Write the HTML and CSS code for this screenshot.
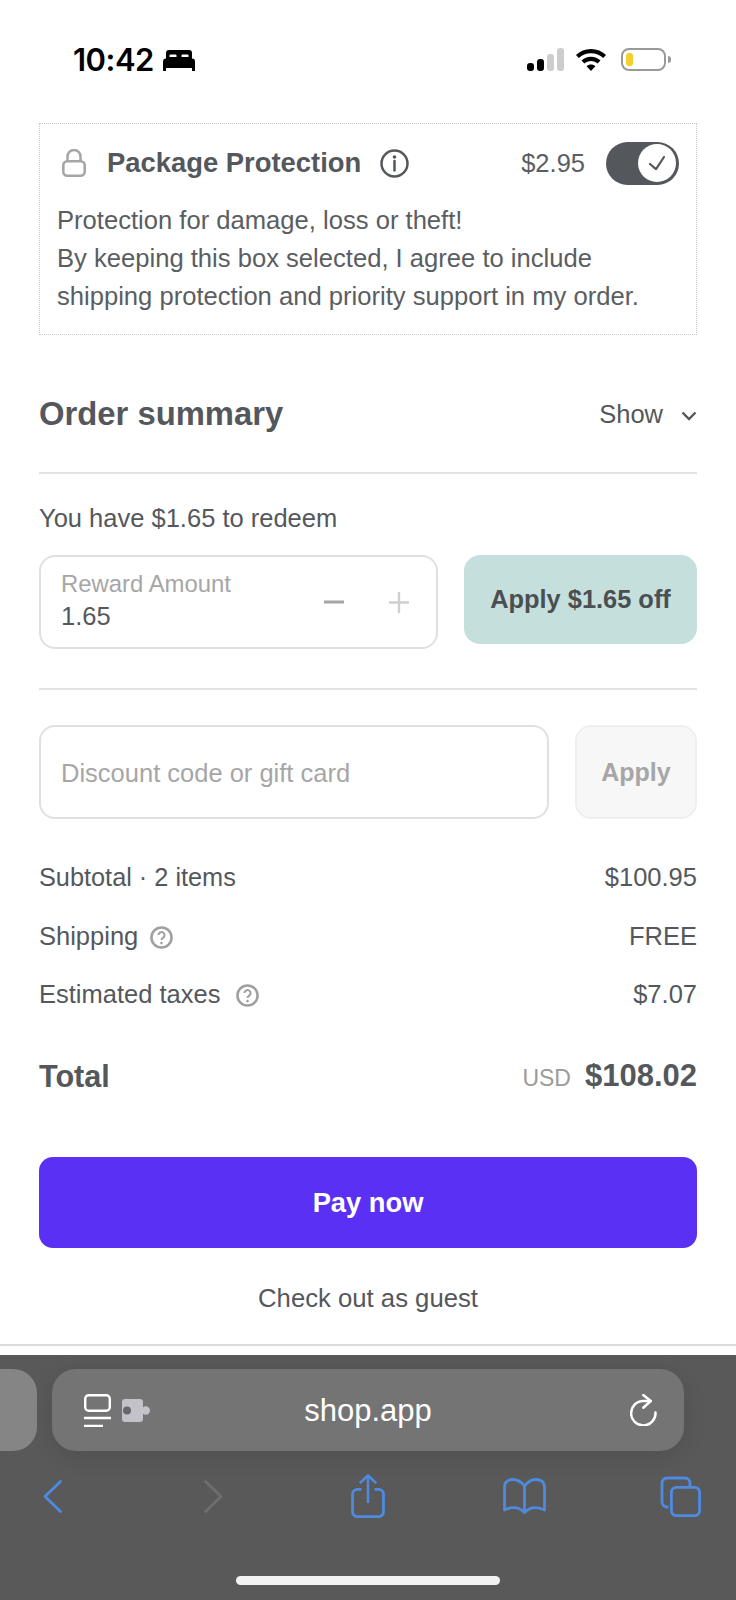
FILE: index.html
```html
<!DOCTYPE html>
<html lang="en">
<head>
<meta charset="utf-8">
<title>Checkout</title>
<link rel="stylesheet" href="styles.css">
</head>
<body>
<div class="page">
  <header class="status">
    <div class="status-left">
      <span class="time">10:42</span>
      <svg class="bed" viewBox="0 0 32 21"><path d="M6 0h20a3 3 0 0 1 3 3v6H3V3a3 3 0 0 1 3-3z" fill="#000"/><path d="M7.500 4.500h5a1 1 0 0 1 1 1V7h-7V5.500a1 1 0 0 1 1-1zM19.500 4.500h5a1 1 0 0 1 1 1V7h-7V5.500a1 1 0 0 1 1-1z" fill="#fff"/><path d="M3 8.500h26a3 3 0 0 1 3 3V21h-3v-3H3v3H0v-9.500a3 3 0 0 1 3-3z" fill="#000"/></svg>
    </div>
    <div class="status-right">
      <div class="signal"><i class="b1"></i><i class="b2"></i><i class="b3"></i><i class="b4"></i></div>
      <svg class="wifi" viewBox="0 0 30 22"><path d="M15 0c5.800 0 11 2.300 15 6l-2.800 3C24 6 19.700 4.200 15 4.200S6 6 2.800 9L0 6C4 2.300 9.200 0 15 0z" fill="#000"/><path d="M15 7.800c3.700 0 7 1.400 9.500 3.700l-2.900 3c-1.800-1.500-4.100-2.500-6.600-2.500s-4.800 1-6.600 2.500l-2.900-3C8 9.200 11.300 7.800 15 7.800z" fill="#000"/><path d="M15 15.500c1.700 0 3.200.6 4.400 1.700L15 22l-4.400-4.800c1.200-1.100 2.700-1.700 4.400-1.700z" fill="#000"/></svg>
      <div class="battery"><span class="battery-fill"></span></div>
      <span class="battery-nub"></span>
    </div>
  </header>

  <main class="content">
    <section class="protect">
      <div class="protect-head">
        <svg class="lock" viewBox="0 0 24 28"><path d="M5.500 12.500V7.500a6.500 6.500 0 0 1 13 0v5" fill="none" stroke="#a6a6a6" stroke-width="2.500"/><rect x="1.300" y="12.300" width="21.400" height="14.400" rx="4" fill="none" stroke="#a6a6a6" stroke-width="2.600"/></svg>
        <h2 class="protect-title">Package Protection</h2>
        <svg class="info" viewBox="0 0 29 29"><circle cx="14.500" cy="14.500" r="13" fill="none" stroke="#54585c" stroke-width="2.500"/><circle cx="14.500" cy="8" r="1.800" fill="#54585c"/><path d="M14.500 12v9.500" fill="none" stroke="#54585c" stroke-width="2.500" stroke-linecap="round"/></svg>
        <span class="protect-price">$2.95</span>
        <div class="toggle">
          <div class="knob"><svg viewBox="0 0 16 14" class="tick"><path d="M1 8l6 5.200L15 1" fill="none" stroke="#54585c" stroke-width="2.200" stroke-linecap="round" stroke-linejoin="round"/></svg></div>
        </div>
      </div>
      <p class="protect-text">Protection for damage, loss or theft!<br>By keeping this box selected, I agree to include<br>shipping protection and priority support in my order.</p>
    </section>

    <section class="summary-head">
      <h2 class="summary-title">Order summary</h2>
      <div class="show">
        <span>Show</span>
        <svg class="chev" viewBox="0 0 16 10"><path d="M1.500 1.500L8 8l6.500-6.500" fill="none" stroke="#54585c" stroke-width="2.400"/></svg>
      </div>
    </section>

    <p class="redeem">You have $1.65 to redeem</p>
    <section class="reward-row">
      <div class="reward-box">
        <div class="reward-fields">
          <span class="reward-label">Reward Amount</span>
          <span class="reward-value">1.65</span>
        </div>
        <svg class="stepper-minus" viewBox="0 0 20 4"><rect width="20" height="3" y="0.500" fill="#a6a6a6"/></svg>
        <svg class="stepper-plus" viewBox="0 0 20 21"><path d="M10 0v21M0 10.500h20" stroke="#cfcfcf" stroke-width="2.400" fill="none"/></svg>
      </div>
      <button class="apply-reward">Apply $1.65 off</button>
    </section>

    <section class="discount-row">
      <div class="discount-box">Discount code or gift card</div>
      <button class="apply-code">Apply</button>
    </section>

    <section class="costs">
      <div class="cost"><span class="subtotal">Subtotal · 2 items</span><span>$100.95</span></div>
      <div class="cost"><span class="with-help">Shipping <svg class="help" viewBox="0 0 24 24"><circle cx="12" cy="12" r="10.500" fill="none" stroke="#a0a0a0" stroke-width="2.700"/><path d="M8.800 9.500a3.200 3.200 0 1 1 5 2.700c-1.200.8-1.800 1.300-1.800 2.500" fill="none" stroke="#a0a0a0" stroke-width="2.100"/><circle cx="12" cy="17.800" r="1.400" fill="#a0a0a0"/></svg></span><span>FREE</span></div>
      <div class="cost"><span class="with-help wide">Estimated taxes <svg class="help" viewBox="0 0 24 24"><circle cx="12" cy="12" r="10.500" fill="none" stroke="#a0a0a0" stroke-width="2.700"/><path d="M8.800 9.500a3.200 3.200 0 1 1 5 2.700c-1.200.8-1.800 1.300-1.800 2.500" fill="none" stroke="#a0a0a0" stroke-width="2.100"/><circle cx="12" cy="17.800" r="1.400" fill="#a0a0a0"/></svg></span><span>$7.07</span></div>
    </section>

    <section class="total">
      <span class="total-label">Total</span>
      <span class="total-right"><span class="currency">USD</span><span class="total-amount">$108.02</span></span>
    </section>

    <button class="pay">Pay now</button>
    <p class="guest">Check out as guest</p>
  </main>

  <div class="page-rule"></div>

  <footer class="safari">
    <div class="pills">
      <div class="pill-side"></div>
      <div class="pill-url">
        <svg class="reader" viewBox="0 0 27 33"><rect x="1.200" y="1.200" width="24.600" height="15.600" rx="3.500" fill="none" stroke="#fff" stroke-width="2.400"/><path d="M0 24h27M0 32h19" stroke="#fff" stroke-width="2.400" fill="none"/></svg>
        <svg class="puzzle" viewBox="0 0 28 23"><rect width="21" height="23" rx="3" fill="#c3c2c9"/><circle cx="23.800" cy="11.500" r="4.200" fill="#c3c2c9"/><circle cx="5" cy="11.500" r="4" fill="#67676b"/></svg>
        <span class="url">shop.app</span>
        <svg class="reload" viewBox="0 0 28 32"><path d="M20.700 7H13.300A12.200 12.200 0 1 0 25.500 18.500" fill="none" stroke="#fff" stroke-width="2.500" stroke-linecap="round"/><path d="M13.300 1l7.400 6-7.400 6.700" fill="none" stroke="#fff" stroke-width="2.500" stroke-linecap="round" stroke-linejoin="round"/></svg>
      </div>
    </div>
    <nav class="tools">
      <svg class="back" viewBox="0 0 19 33"><path d="M17.500 1.500L2 16.500 17.500 31.500" fill="none" stroke="#4d8ae0" stroke-width="2.800" stroke-linecap="round" stroke-linejoin="round"/></svg>
      <svg class="forward" viewBox="0 0 19 33"><path d="M1.500 1.500L17 16.500 1.500 31.500" fill="none" stroke="#6e6e6e" stroke-width="2.800" stroke-linecap="round" stroke-linejoin="round"/></svg>
      <svg class="share" viewBox="0 0 34 44"><path d="M10.500 15.300H6.500a5 5 0 0 0-5 5v17.400a5 5 0 0 0 5 5h21a5 5 0 0 0 5-5V20.300a5 5 0 0 0-5-5h-4" fill="none" stroke="#4d8ae0" stroke-width="2.800"/><path d="M17 28V2M9.500 8.500L17 1.500 24.500 8.500" fill="none" stroke="#4d8ae0" stroke-width="2.500" stroke-linecap="round" stroke-linejoin="round"/></svg>
      <svg class="book" viewBox="0 0 43 36"><path d="M21.500 8C18 3.500 14 1.500 10 1.500 5 1.500 1.500 4 1.500 9v23c7-3.500 14.500-3 20 2.500 5.500-5.500 13-6 20-2.500V9c0-5-3.500-7.500-8.500-7.500-4 0-8 2-11.500 6.500zM21.500 8v26" fill="none" stroke="#4d8ae0" stroke-width="2.800" stroke-linejoin="round"/></svg>
      <svg class="tabs" viewBox="0 0 41 41"><path d="M8.500 31H7a5 5 0 0 1-5-5V7a5 5 0 0 1 5-5h18a5 5 0 0 1 5 5v3" fill="none" stroke="#4d8ae0" stroke-width="2.800"/><rect x="11.400" y="11.400" width="28.200" height="28.200" rx="5" fill="none" stroke="#4d8ae0" stroke-width="2.800"/></svg>
    </nav>
    <div class="home-bar"></div>
  </footer>
</div>
</body>
</html>
```

FILE: styles.css
```css
* { box-sizing: border-box; }
html, body { margin: 0; padding: 0; background: #fff; }
body { font-family: "Liberation Sans", Arial, sans-serif; color: #54585c; }
h2, p { margin: 0; }
button { font-family: inherit; border: 0; padding: 0; }

.page { width: 736px; height: 1600px; overflow: hidden; display: flex; flex-direction: column; }

/* status bar */
.status { height: 123px; flex: none; padding: 48px 65px 0 73px; display: flex; justify-content: space-between; align-items: flex-start; }
.status-left { display: flex; align-items: center; gap: 9px; height: 24px; }
.time { font-family: Inter, sans-serif; font-weight: 600; font-size: 31px; line-height: 24px; color: #000; letter-spacing: -0.5px; }
.bed { width: 32px; height: 21px; margin-top: 1px; }
.status-right { display: flex; align-items: flex-end; height: 23px; }
.signal { display: flex; align-items: flex-end; gap: 3px; height: 23px; margin-right: 12px; }
.signal i { display: block; width: 7px; border-radius: 3px; background: #000; }
.signal .b1 { height: 8px; }
.signal .b2 { height: 12px; }
.signal .b3 { height: 17px; background: #cdcdcd; }
.signal .b4 { height: 23px; background: #cdcdcd; }
.wifi { width: 30px; height: 22px; margin-right: 15px; }
.battery { width: 45px; height: 23px; border: 2px solid #999; border-radius: 8px; padding: 3px; background: #fff; }
.battery-fill { display: block; width: 7px; height: 13px; border-radius: 3px; background: #f5cf2b; }
.battery-nub { width: 3px; height: 7px; margin: 0 0 8px 2px; background: #999; border-radius: 0 3px 3px 0; }

/* content */
.content { padding: 0 39px; display: flex; flex-direction: column; flex: none; }

.protect { height: 212px; border: 1px dotted #c8c8c8; padding: 17px 17px 0; }
.protect-head { display: flex; align-items: center; height: 44px; }
.lock { width: 24px; height: 28px; margin-left: 5px; flex: none; }
.protect-title { font-size: 27.400px; font-weight: 700; line-height: 44px; margin-left: 21px; color: #54585c; }
.info { width: 29px; height: 29px; margin-left: 19px; flex: none; }
.protect-price { font-size: 25.500px; margin-left: auto; color: #5a5e62; }
.toggle { width: 73px; height: 43px; border-radius: 22px; background: #54585c; margin-left: 21px; padding: 2.500px 3px 2.500px 32px; }
.knob { width: 38px; height: 38px; border-radius: 50%; background: #fff; display: flex; align-items: center; justify-content: center; }
.tick { width: 16px; height: 14px; }
.protect-text { font-size: 25.600px; line-height: 38px; margin-top: 16px; color: #5a5e62; }

.summary-head { margin-top: 58px; height: 81px; padding: 2px 0 39px; border-bottom: 2px solid #e3e3e3; display: flex; justify-content: space-between; align-items: center; }
.summary-title { font-size: 32.800px; font-weight: 700; line-height: 40px; }
.show { display: flex; align-items: center; gap: 18px; font-size: 25.500px; }
.chev { width: 16px; height: 10px; margin-top: 3px; }

.redeem { font-size: 25.500px; line-height: 30px; margin-top: 29px; }

.reward-row { margin-top: 22px; padding-bottom: 39px; border-bottom: 2px solid #e3e3e3; display: flex; justify-content: space-between; align-items: flex-start; height: 135px; }
.reward-box { width: 399px; height: 94px; border: 2px solid #e0e0e0; border-radius: 16px; padding: 0 27px 0 20px; display: flex; align-items: center; }
.reward-fields { display: flex; flex-direction: column; flex: 1; margin-bottom: 4px; }
.reward-label { font-size: 23.900px; line-height: 33px; color: #a6a6a6; }
.reward-value { font-size: 25.500px; line-height: 33px; color: #54585c; }
.stepper-minus { width: 20px; height: 4px; margin: 0 45px 0 0; }
.stepper-plus { width: 20px; height: 21px; }
.apply-reward { width: 233px; height: 89px; border-radius: 16px; background: #c5e0dc; color: #4a4f52; font-size: 25.400px; font-weight: 700; }

.discount-row { margin-top: 35px; display: flex; justify-content: space-between; }
.discount-box { width: 510px; height: 94px; border: 2px solid #e0e0e0; border-radius: 16px; padding: 2px 0 0 20px; display: flex; align-items: center; font-size: 25.500px; color: #a6a6a6; }
.apply-code { width: 122px; height: 94px; border-radius: 16px; background: #f7f7f7; border: 2px solid #efefef; color: #a6a6a6; font-size: 25px; font-weight: 700; }

.costs { margin-top: 29px; }
.cost { height: 58.700px; display: flex; justify-content: space-between; align-items: center; font-size: 25.500px; }
.subtotal { font-size: 25.300px; }
.with-help { display: flex; align-items: center; gap: 12px; }
.with-help.wide { gap: 16px; }
.help { width: 23px; height: 23px; margin-top: 2px; }

.total { margin-top: 33px; height: 38px; display: flex; justify-content: space-between; align-items: center; margin-bottom: 2px; }
.total-label { font-size: 30.600px; font-weight: 700; }
.total-right { display: flex; align-items: baseline; gap: 14px; }
.currency { font-size: 23px; color: #9b9b9b; }
.total-amount { font-size: 31px; font-weight: 700; }

.pay { margin-top: 60px; height: 91px; border-radius: 14px; background: #5a31f4; color: #fff; font-size: 27.300px; font-weight: 700; }
.guest { margin-top: 35px; line-height: 30px; font-size: 25.700px; text-align: center; }

.page-rule { margin-top: 31px; height: 2px; background: #dcdcdc; flex: none; }

/* safari chrome */
.safari { margin-top: 9px; height: 245px; flex: none; background: #595959; display: flex; flex-direction: column; }
.pills { margin-top: 14px; display: flex; gap: 15px; height: 82px; flex: none; }
.pill-side { width: 37px; background: #858585; border-radius: 0 24px 24px 0; }
.pill-url { width: 632px; background: #747474; border-radius: 24px; display: flex; align-items: center; padding: 0 26px 0 32px; position: relative; box-shadow: 0 6px 22px rgba(0,0,0,.1); }
.reader { width: 27px; height: 33px; }
.puzzle { width: 28px; height: 23px; margin-left: 11px; }
.url { position: absolute; left: 0; right: 0; top: 50%; transform: translateY(-46%); text-align: center; font-size: 31px; color: #fff; }
.reload { width: 28px; height: 32px; margin-left: auto; }

.tools { margin-top: 23px; height: 44px; padding-left: 43px; display: grid; grid-template-columns: 161px 147px 152px 157px auto; align-items: center; flex: none; }
.back, .forward { width: 19px; height: 33px; }
.share { width: 34px; height: 44px; }
.book { width: 43px; height: 36px; }
.tabs { width: 41px; height: 41px; }

.home-bar { width: 264px; height: 9px; border-radius: 5px; background: #f2f2f2; margin: 58px auto 0; flex: none; }
```
